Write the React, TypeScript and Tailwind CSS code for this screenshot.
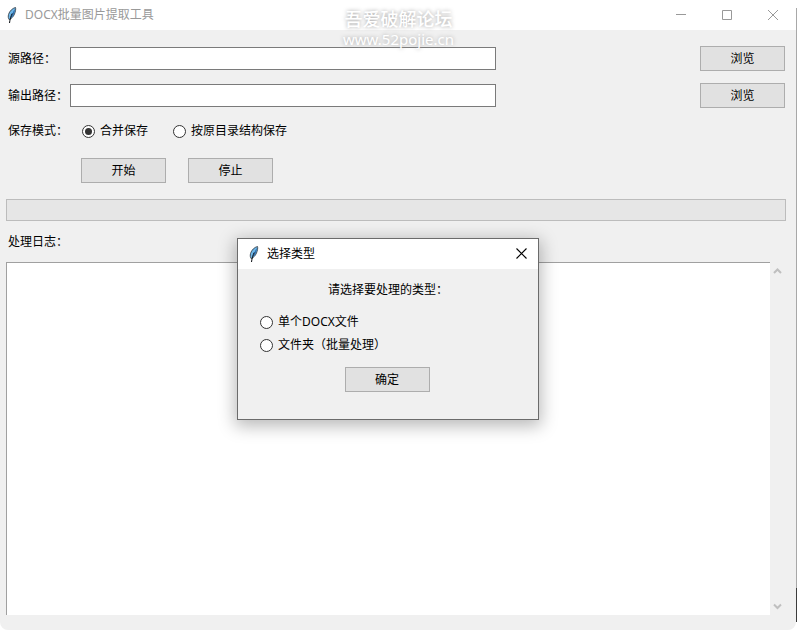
import { useState } from "react";

interface ButtonProps {
  children: React.ReactNode;
  onClick?: () => void;
}

interface RadioProps {
  name: string;
  label: string;
  checked: boolean;
  onChange: () => void;
}

export default function App() {
  const [source, setSource] = useState("");
  const [output, setOutput] = useState("");
  const [mode, setMode] = useState("merge");
  const [log, setLog] = useState("");
  const [dialogOpen, setDialogOpen] = useState(true);

  return (
    <div className="relative flex min-h-screen bg-white text-[12px] leading-4 text-black font-['Noto_Sans','Noto_Sans_CJK_SC',sans-serif]">
      <div className="flex min-w-0 flex-1 flex-col overflow-hidden rounded-b-lg bg-[#f0f0f0]">
        {/* Title bar */}
        <header className="flex h-[30px] items-center bg-white pl-1">
          <Feather />
          <h1 className="ml-[5px] flex-1 text-[#999999]">DOCX批量图片提取工具</h1>
          <WindowButton label="最小化">
            <path d="M0 4.5H10" />
          </WindowButton>
          <WindowButton label="最大化">
            <path d="M.5 .5H9.5V9.5H.5Z" />
          </WindowButton>
          <WindowButton label="关闭">
            <path d="M0 0L10 10M10 0L0 10" />
          </WindowButton>
        </header>

        <main className="flex flex-1 flex-col pt-4 pb-[15px]">
          {/* Paths */}
          <div className="flex flex-col gap-3 pr-[11px] pl-2">
            <PathRow id="source" label="源路径：" value={source} onChange={setSource} />
            <PathRow id="output" label="输出路径：" value={output} onChange={setOutput} />
          </div>

          {/* Save mode */}
          <div role="radiogroup" aria-labelledby="mode" className="mt-3 flex h-[22px] items-center pl-2">
            <span id="mode" className="w-[74px]">保存模式：</span>
            <div className="flex gap-[25px]">
              <Radio name="mode" label="合并保存" checked={mode === "merge"} onChange={() => setMode("merge")} />
              <Radio name="mode" label="按原目录结构保存" checked={mode === "tree"} onChange={() => setMode("tree")} />
            </div>
          </div>

          <div className="mt-4 flex gap-[22px] pl-[81px]">
            <Button>开始</Button>
            <Button>停止</Button>
          </div>

          <div
            role="progressbar"
            aria-label="进度"
            aria-valuenow={0}
            className="mt-4 mr-[10px] ml-[6px] h-[22px] border border-[#bcbcbc] bg-[#e6e6e6]"
          />

          {/* Log */}
          <label htmlFor="log" className="mt-[13px] ml-2 self-start">处理日志：</label>
          <div className="mt-3 flex flex-1 pr-[11px] pl-[6px]">
            <textarea
              id="log"
              value={log}
              onChange={(e) => setLog(e.target.value)}
              className="flex-1 resize-none border-t border-l border-[#a0a0a0] bg-white p-1 outline-none"
            />
            <div className="flex w-[15px] flex-col justify-between">
              <ScrollButton label="向上滚动" d="M1 6L4.5 2.5L8 6" />
              <ScrollButton label="向下滚动" d="M1 1.5L4.5 5L8 1.5" />
            </div>
          </div>
        </main>
      </div>

      {/* Window edge */}
      <div className="my-2 flex w-px flex-col">
        <div className="flex-1 bg-[#a8a8a8]" />
        <div className="h-[34px] bg-[#3c3c3c]" />
      </div>

      {/* Watermark */}
      <div className="pointer-events-none absolute inset-x-0 top-2 flex flex-col items-center text-white [text-shadow:0_0_4px_#a0a0a0]">
        <span className="text-[18px] leading-[22px] font-medium">吾爱破解论坛</span>
        <span className="text-[15px] leading-[18px]">www.52pojie.cn</span>
      </div>

      {dialogOpen && <TypeDialog onClose={() => setDialogOpen(false)} />}
    </div>
  );
}

function TypeDialog({ onClose }: { onClose: () => void }) {
  const [type, setType] = useState("");

  return (
    <div
      role="dialog"
      aria-labelledby="dialog-title"
      className="absolute top-[238px] left-[237px] flex h-[182px] w-[302px] flex-col border border-[#6b6b6b] bg-[#f0f0f0] shadow-[0_4px_16px_2px_rgba(0,0,0,0.28)]"
    >
      <div className="flex h-[30px] items-center bg-white pl-2">
        <Feather />
        <h2 id="dialog-title" className="ml-[5px] flex-1">选择类型</h2>
        <button aria-label="关闭" onClick={onClose} className="flex h-[30px] w-8 items-center justify-center">
          <svg width="12" height="12" viewBox="0 0 12 12" fill="none" stroke="#000" strokeWidth="1.1">
            <path d="M.5 .5L10.500 10.500M10.500 .5L.5 10.500" />
          </svg>
        </button>
      </div>
      <p className="mt-[13px] pl-[90px]">请选择要处理的类型：</p>
      <div className="mt-4 flex flex-col gap-[7px] pl-[22px]">
        <Radio name="type" label="单个DOCX文件" checked={type === "file"} onChange={() => setType("file")} />
        <Radio name="type" label="文件夹（批量处理）" checked={type === "folder"} onChange={() => setType("folder")} />
      </div>
      <div className="mt-[14px] flex justify-center pr-[2px]">
        <Button onClick={onClose}>确定</Button>
      </div>
    </div>
  );
}

function PathRow({ id, label, value, onChange }: { id: string; label: string; value: string; onChange: (v: string) => void }) {
  return (
    <div className="flex items-center">
      <label htmlFor={id} className="w-[62px] shrink-0">{label}</label>
      <div className="flex flex-1">
        <input
          id={id}
          type="text"
          value={value}
          onChange={(e) => onChange(e.target.value)}
          className="h-[23px] w-full max-w-[426px] border border-[#7a7a7a] bg-white px-1 outline-none"
        />
      </div>
      <Button>浏览</Button>
    </div>
  );
}

function Button({ children, onClick }: ButtonProps) {
  return (
    <button
      onClick={onClick}
      className="h-[25px] w-[85px] shrink-0 border border-[#adadad] bg-[#e1e1e1] text-center hover:border-[#0078d7] hover:bg-[#e5f1fb]"
    >
      {children}
    </button>
  );
}

function Radio({ name, label, checked, onChange }: RadioProps) {
  return (
    <label className="flex items-center gap-[5px]">
      <input
        type="radio"
        name={name}
        checked={checked}
        onChange={onChange}
        className="grid size-[13px] appearance-none place-content-center rounded-full border border-[#333333] bg-white before:size-[7px] before:rounded-full checked:before:bg-[#333333]"
      />
      {label}
    </label>
  );
}

function WindowButton({ label, children }: { label: string; children: React.ReactNode }) {
  return (
    <button aria-label={label} className="flex h-[30px] w-[46px] items-center justify-center">
      <svg width="10" height="10" viewBox="0 0 10 10" fill="none" stroke="#999999">
        {children}
      </svg>
    </button>
  );
}

function ScrollButton({ label, d }: { label: string; d: string }) {
  return (
    <button aria-label={label} className="flex h-[17px] items-center justify-center">
      <svg width="9" height="7" viewBox="0 0 9 7" fill="none" stroke="#bfbfbf" strokeWidth="2">
        <path d={d} />
      </svg>
    </button>
  );
}

function Feather() {
  return (
    <svg width="16" height="16" viewBox="0 0 16 16" aria-hidden="true" className="shrink-0">
      <path d="M11.500 .5C8.500 1.200 5.500 4 4.500 7.500C4 9.500 4.300 11.500 5 12.500C7 12.300 9.500 9.500 10.500 7C11.500 4.500 12 2 11.500 .5Z" fill="#6db6e8" stroke="#2b333b" strokeWidth=".8" />
      <path d="M9.500 4C8 7.500 6.800 10 5.800 12C7.800 10.500 9.300 8.500 10.100 6.500C10.600 5 10.900 3.500 11 2Z" fill="#2f6fae" />
      <path d="M8.200 6.500C7 9 6 12 5.500 16" fill="none" stroke="#0b0f14" />
    </svg>
  );
}
